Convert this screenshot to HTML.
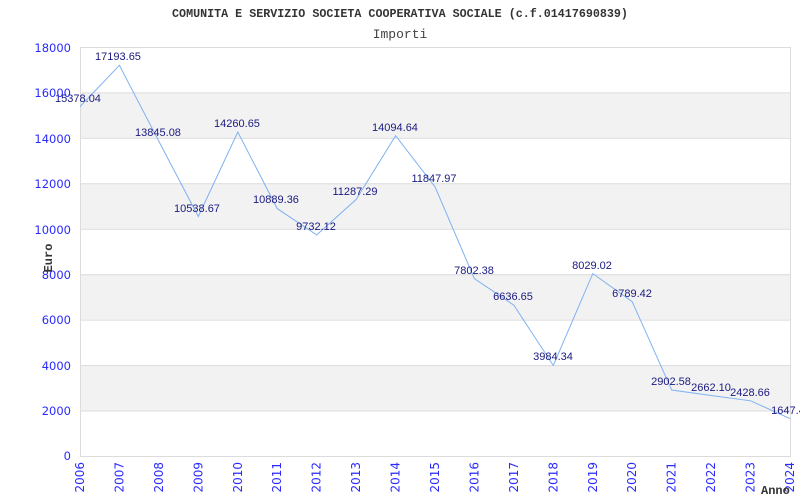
<!DOCTYPE html>
<html><head><meta charset="utf-8"><style>body{margin:0;background:#fff}svg{display:block}</style></head><body>
<svg width="800" height="500" xmlns="http://www.w3.org/2000/svg">
<rect width="800" height="500" fill="#fff"/>
<g fill="#f2f2f2">
<rect x="80" y="92.4" width="710" height="45.4"/>
<rect x="80" y="183.3" width="710" height="45.4"/>
<rect x="80" y="274.2" width="710" height="45.4"/>
<rect x="80" y="365.1" width="710" height="45.4"/>
</g>
<g stroke="#dcdcdc" stroke-width="1">
<line x1="80" x2="790" y1="47.5" y2="47.5"/><line x1="80" x2="790" y1="92.9" y2="92.9"/><line x1="80" x2="790" y1="138.3" y2="138.3"/><line x1="80" x2="790" y1="183.8" y2="183.8"/><line x1="80" x2="790" y1="229.2" y2="229.2"/><line x1="80" x2="790" y1="274.7" y2="274.7"/><line x1="80" x2="790" y1="320.1" y2="320.1"/><line x1="80" x2="790" y1="365.6" y2="365.6"/><line x1="80" x2="790" y1="411" y2="411"/><line x1="80" x2="790" y1="456.5" y2="456.5"/>
<line x1="80.5" x2="80.5" y1="47" y2="457"/><line x1="790.5" x2="790.5" y1="47" y2="457"/>
</g>
<polyline fill="none" stroke="#7fb2f0" stroke-width="1" points="80,106.6 119.4,65.3 158.9,141.4 198.3,216.5 237.8,132 277.2,208.6 316.7,234.9 356.1,199.5 395.6,135.7 435,186.8 474.4,278.7 513.9,305.2 553.3,365.5 592.8,273.6 632.2,301.7 671.7,390 711.1,395.5 750.6,400.8 790,418.6"/>
<g font-family="'Liberation Sans',sans-serif" font-size="11" fill="#1a1a80" text-anchor="middle">
<text x="78" y="102">15378.04</text><text x="118" y="60">17193.65</text><text x="158" y="136">13845.08</text><text x="197" y="212">10538.67</text><text x="237" y="127">14260.65</text><text x="276" y="203">10889.36</text><text x="316" y="230">9732.12</text><text x="355" y="195">11287.29</text><text x="395" y="131">14094.64</text><text x="434" y="182">11847.97</text><text x="474" y="274">7802.38</text><text x="513" y="300">6636.65</text><text x="553" y="360">3984.34</text><text x="592" y="269">8029.02</text><text x="632" y="297">6789.42</text><text x="671" y="385">2902.58</text><text x="711" y="391">2662.10</text><text x="750" y="396">2428.66</text><text x="788" y="414">1647.4</text>
</g>
<g font-family="'DejaVu Sans',sans-serif" font-size="11.5" fill="#2a2aff" text-anchor="end">
<text x="71" y="52">18000</text><text x="71" y="97">16000</text><text x="71" y="143">14000</text><text x="71" y="188">12000</text><text x="71" y="234">10000</text><text x="71" y="279">8000</text><text x="71" y="324">6000</text><text x="71" y="370">4000</text><text x="71" y="415">2000</text><text x="71" y="460">0</text>
</g>
<g font-family="'DejaVu Sans',sans-serif" font-size="12" fill="#2a2aff" text-anchor="end">
<text transform="translate(84,462) rotate(-90)">2006</text><text transform="translate(123.4,462) rotate(-90)">2007</text><text transform="translate(162.9,462) rotate(-90)">2008</text><text transform="translate(202.3,462) rotate(-90)">2009</text><text transform="translate(241.8,462) rotate(-90)">2010</text><text transform="translate(281.2,462) rotate(-90)">2011</text><text transform="translate(320.7,462) rotate(-90)">2012</text><text transform="translate(360.1,462) rotate(-90)">2013</text><text transform="translate(399.6,462) rotate(-90)">2014</text><text transform="translate(439,462) rotate(-90)">2015</text><text transform="translate(478.4,462) rotate(-90)">2016</text><text transform="translate(517.9,462) rotate(-90)">2017</text><text transform="translate(557.3,462) rotate(-90)">2018</text><text transform="translate(596.8,462) rotate(-90)">2019</text><text transform="translate(636.2,462) rotate(-90)">2020</text><text transform="translate(675.7,462) rotate(-90)">2021</text><text transform="translate(715.1,462) rotate(-90)">2022</text><text transform="translate(754.6,462) rotate(-90)">2023</text><text transform="translate(794,462) rotate(-90)">2024</text>
</g>
<text x="400" y="17" text-anchor="middle" font-family="'Liberation Mono',monospace" font-size="11.7" font-weight="bold" fill="#333">COMUNITA E SERVIZIO SOCIETA COOPERATIVA SOCIALE (c.f.01417690839)</text>
<text x="400" y="38" text-anchor="middle" font-family="'Liberation Mono',monospace" font-size="13" fill="#444">Importi</text>
<text transform="translate(52,258) rotate(-90)" text-anchor="middle" font-family="'Liberation Mono',monospace" font-size="12" font-weight="bold" fill="#333">Euro</text>
<text x="761" y="494" font-family="'Liberation Mono',monospace" font-size="12" font-weight="bold" fill="#333">Anno</text>
</svg>
</body></html>
